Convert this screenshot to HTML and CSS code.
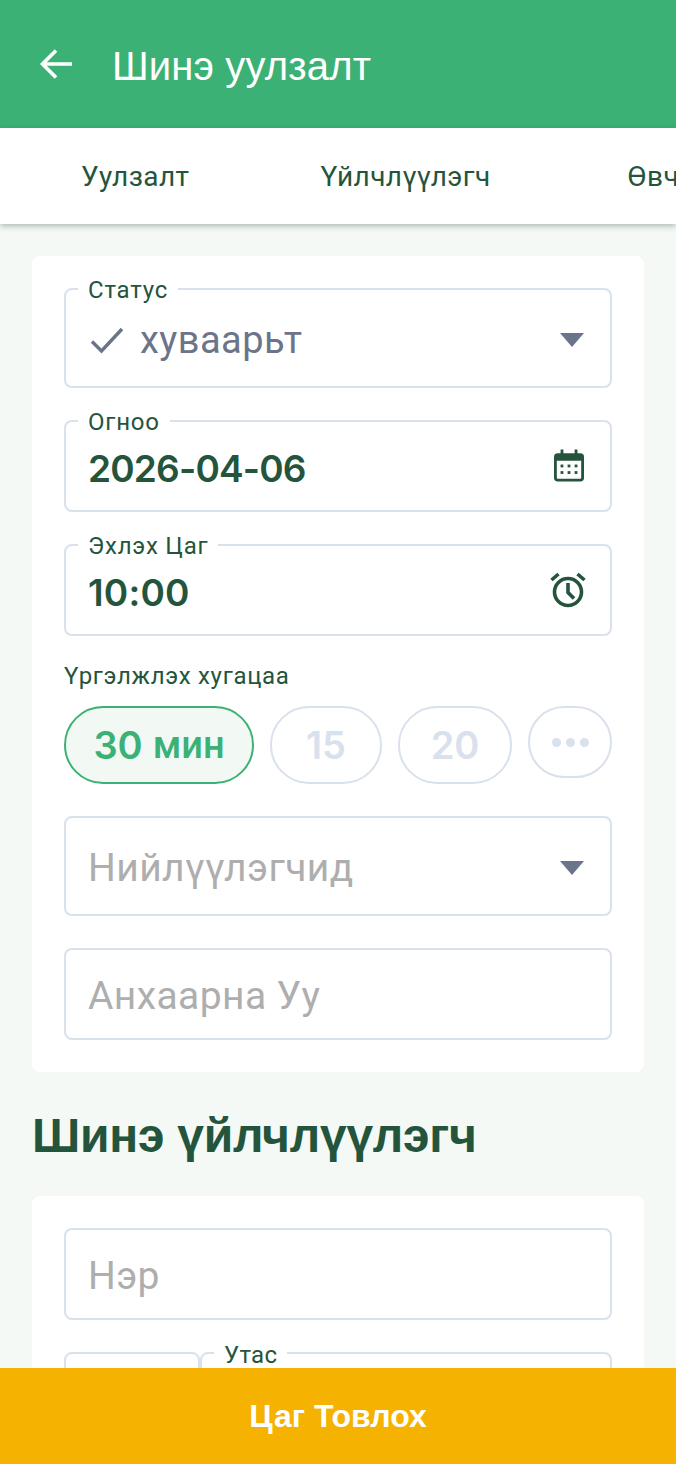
FILE: index.html
```html
<!DOCTYPE html>
<html lang="mn">
<head>
<meta charset="utf-8">
<title>Шинэ уулзалт</title>
<link rel="stylesheet" href="styles.css">
</head>
<body>
<div class="app">
  <header class="topbar">
    <svg class="back" viewBox="0 0 36 36" aria-hidden="true"><path d="M33 18H4M17 4.500 3.500 18 17 31.500"/></svg>
    <h1 class="title">Шинэ уулзалт</h1>
  </header>
  <nav class="tabs">
    <span class="tab">Уулзалт</span>
    <span class="tab">Үйлчлүүлэгч</span>
    <span class="tab last">Өвчтөн</span>
  </nav>
  <main class="content">
    <section class="card">
      <div class="field tall">
        <span class="legend">Статус</span>
        <svg class="check" viewBox="0 0 34 28" aria-hidden="true"><path d="M2 15.500 11.500 25 32 3"/></svg>
        <span class="status">хуваарьт</span>
        <span class="caret"></span>
      </div>
      <div class="field">
        <span class="legend">Огноо</span>
        <span class="value date">2026-04-06</span>
        <svg class="icon" viewBox="0 0 32 36" aria-hidden="true">
          <path class="solid" d="M7 1h3v4h12V1h3v4h3a4 4 0 0 1 4 4v22a4 4 0 0 1-4 4H4a4 4 0 0 1-4-4V9a4 4 0 0 1 4-4h3zM3 13v18a1 1 0 0 0 1 1h24a1 1 0 0 0 1-1V13z"/>
          <rect class="solid" x="7" y="17" width="3" height="3"/><rect class="solid" x="14.500" y="17" width="3" height="3"/><rect class="solid" x="22" y="17" width="3" height="3"/>
          <rect class="solid" x="7" y="24" width="3" height="3"/><rect class="solid" x="14.500" y="24" width="3" height="3"/><rect class="solid" x="22" y="24" width="3" height="3"/>
        </svg>
      </div>
      <div class="field">
        <span class="legend">Эхлэх Цаг</span>
        <span class="value">10:00</span>
        <svg class="icon alarm" viewBox="0 0 36 36" aria-hidden="true">
          <circle class="line" cx="18" cy="20" r="13.500"/>
          <path class="line" d="M18 11v9.500l6 6M1.500 8 8.500 2M34.500 8l-7-6"/>
        </svg>
      </div>
      <p class="duration-label">Үргэлжлэх хугацаа</p>
      <div class="chips">
        <span class="chip active">30 <span class="cyr">мин</span></span>
        <span class="chip n15">15</span>
        <span class="chip n20">20</span>
        <span class="chip more"><i></i><i></i><i></i></span>
      </div>
      <div class="field tall plain">
        <span class="placeholder">Нийлүүлэгчид</span>
        <span class="caret"></span>
      </div>
      <div class="field plain">
        <span class="placeholder">Анхаарна Уу</span>
      </div>
    </section>
    <h2 class="section-title">Шинэ үйлчлүүлэгч</h2>
    <section class="card">
      <div class="field plain">
        <span class="placeholder">Нэр</span>
      </div>
      <div class="phone-row">
        <div class="field code"></div>
        <div class="field phone"><span class="legend">Утас</span></div>
      </div>
    </section>
  </main>
  <footer class="action">Цаг Товлох</footer>
</div>
</body>
</html>
```
FILE: styles.css
```css
* { box-sizing: border-box; }
html, body { margin: 0; padding: 0; }
body { font-family: Roboto, "Liberation Sans", sans-serif; color: #24553c; background: #f4f9f6; }
.app { width: 676px; height: 1464px; display: flex; flex-direction: column; overflow: hidden; }

.topbar { flex: none; height: 128px; background: #3cb175; display: flex; align-items: center; padding-left: 39px; color: #fff; }
.back { width: 36px; height: 36px; margin-right: 37px; fill: none; stroke: #fff; stroke-width: 3.600; }
.title { margin: 4px 0 0; font-family: "Liberation Sans", sans-serif; font-size: 40px; font-weight: 400; line-height: 1; letter-spacing: 0.150px; }

.tabs { flex: none; height: 96px; background: #fff; display: flex; align-items: center; padding-left: 81px; gap: 131px; white-space: nowrap; overflow: hidden; font-size: 28px; letter-spacing: 0.400px; box-shadow: 0 2px 6px rgba(40, 60, 50, 0.35); position: relative; z-index: 1; }
.tab { flex: none; }
.tab.last { margin-left: 6px; }

.content { flex: 1; min-height: 0; overflow: hidden; padding: 32px 32px 0; }
.card { background: #fff; border-radius: 8px; padding: 32px; display: flex; flex-direction: column; gap: 32px; }

.field { position: relative; height: 92px; border: 2px solid #d9e1ed; border-radius: 8px; display: flex; align-items: center; padding: 4px 24px 0 22px; }
.field.tall { height: 100px; }
.legend { position: absolute; left: 12px; top: -14px; padding: 0 10px; background: #fff; font-size: 24px; line-height: 28px; letter-spacing: 0.800px; }

.check { width: 34px; height: 28px; margin-right: 16px; margin-left: 2px; fill: none; stroke: #6b7489; stroke-width: 3.400; flex: none; }
.status { font-size: 38px; color: #6b7489; letter-spacing: 0.450px; }
.caret { margin-left: auto; margin-right: 2px; width: 0; height: 0; border-left: 12px solid transparent; border-right: 12px solid transparent; border-top: 14px solid #6b7489; }

.value { font-family: Inter, Roboto, sans-serif; font-size: 37px; font-weight: 600; color: #24553c; letter-spacing: 0.200px; }
.value.date { letter-spacing: -0.800px; }
.icon { margin-left: auto; margin-right: 2px; margin-top: -6px; width: 30px; height: 35px; flex: none; }
.icon.alarm { width: 36px; height: 36px; margin-right: 0; margin-top: -4px; }
.solid { fill: #24553c; }
.line { fill: none; stroke: #24553c; stroke-width: 3.600; }

.duration-label { margin: -6px 0 -16px; font-size: 24px; line-height: 28px; letter-spacing: 0.700px; }
.chips { display: flex; justify-content: space-between; align-items: flex-start; }
.chip { height: 78px; border: 2px solid #d9e1ed; border-radius: 39px; display: flex; align-items: center; justify-content: center; gap: 10px; font-family: Inter, Roboto, sans-serif; font-size: 38px; font-weight: 600; color: #d9e1ed; }
.chip.active { width: 190px; border-color: #3cb175; background: #f2f9f5; color: #3cb175; }
.chip.active .cyr { font-family: Roboto, sans-serif; font-weight: 500; }
.n15 { width: 112px; }
.n20 { width: 114px; }
.chip.more { width: 84px; height: 72px; gap: 5px; border-radius: 36px; }
.chip.more i { width: 9px; height: 9px; border-radius: 50%; background: #d9e1ed; }

.placeholder { font-size: 39px; color: #aeaeae; letter-spacing: 0.400px; }

.section-title { margin: 32px 0 28px; font-family: "Liberation Sans", sans-serif; font-size: 48px; line-height: 64px; font-weight: 700; color: #24553c; letter-spacing: -0.250px; }

.phone-row { display: flex; }
.code { width: 136px; flex: none; }
.phone { flex: 1; }
.phone .legend { left: 12px; top: -13px; letter-spacing: 0.300px; }

.action { flex: none; height: 96px; background: #f5b200; color: #fff; display: flex; align-items: center; justify-content: center; font-family: "Liberation Sans", sans-serif; font-size: 32px; font-weight: 700; }
```
